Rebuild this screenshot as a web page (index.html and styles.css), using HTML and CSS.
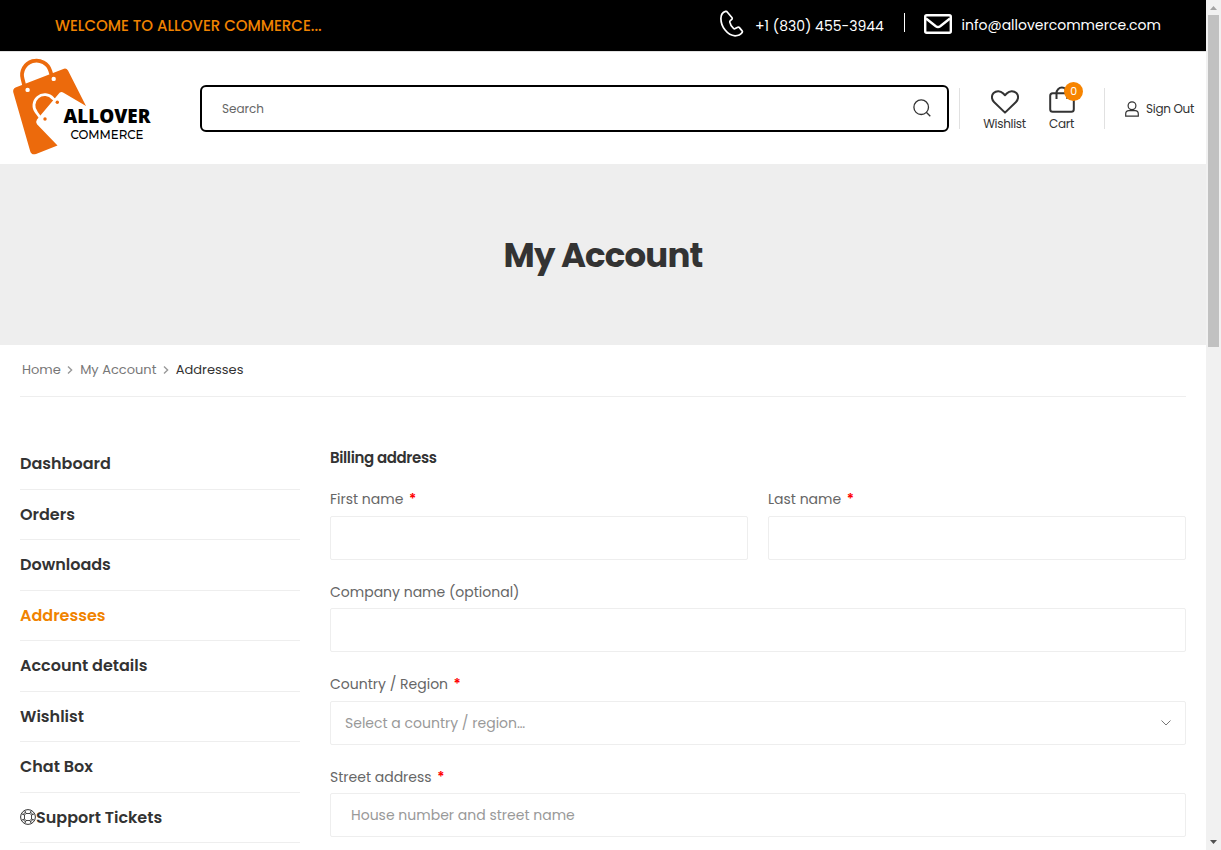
FILE: index.html
```html
<!DOCTYPE html>
<html lang="en">
<head>
<meta charset="utf-8">
<title>My Account</title>
<link rel="stylesheet" href="styles.css">
</head>
<body>
<div class="page">
  <div class="topbar">
    <span class="welcome">WELCOME TO ALLOVER COMMERCE...</span>
    <div class="contacts">
      <svg class="phone-icon" width="24" height="28" viewBox="0 0 24 28" fill="none" stroke="#fff" stroke-width="1.700" stroke-linejoin="round"><path d="M5.600 1.400C2.800 2.200.9 4.800.9 8.400c0 8.200 6.500 17.200 14.200 17.400 3.400 0 5.600-1.200 7.100-3.200.4-.6.3-1.200-.1-1.700l-2.700-3.300c-.4-.5-1-.6-1.600-.3l-2.600 1.300c-.6.3-1.200.2-1.700-.2-2-1.600-3.200-3.700-3.700-6.200-.1-.6 0-1.100.5-1.500l1.500-1.300c.5-.4.6-1 .3-1.600L7.200 2c-.3-.6-.9-.8-1.600-.6z"/></svg>
      <span class="phone">+1 (830) 455-3944</span>
      <span class="bar"></span>
      <svg class="mail-icon" width="28" height="20" viewBox="0 0 28 20" fill="none" stroke="#fff" stroke-width="2.400"><rect x="1.200" y="1.200" width="25.600" height="17.600" rx="1.500"/><path d="M2 4.500l9.800 7.700c1.400 1 3 1 4.400 0L26 4.500"/></svg>
      <span class="email">info@allovercommerce.com</span>
    </div>
  </div>
  <header class="header">
    <svg class="logo" width="145" height="104" viewBox="10 54 145 104">
      <path d="M24.500 86.500L22.600 79A14.300 14.300 0 0 1 50.300 71L52 76.500" fill="none" stroke="#ec6a0c" stroke-width="3.800"/>
      <path d="M15.500 87.500L64 68.700Q66.500 68 68 70.500L86 106 63.500 92.700Q60.500 91 58.500 94L37 119.500Q35.300 122 37 124.300L57.500 145.500 36 154Q31.500 155.300 30.300 151.500L13.200 92Q12.800 88.800 15.500 87.500z" fill="#ec6a0c"/>
      <path d="M40.500 118L36.500 112.500A10.500 10.500 0 0 1 53 98.500L56 101" fill="none" stroke="#fff" stroke-width="2.800"/>
      <circle cx="27.600" cy="89.900" r="2.200" fill="#fff"/><circle cx="53.700" cy="78.900" r="2.200" fill="#fff"/>
      <circle cx="57.300" cy="102.300" r="1.700" fill="#ec6a0c"/><circle cx="45" cy="119" r="1.700" fill="#ec6a0c"/>
      <text x="63.500" y="123" class="logo-main" textLength="87" lengthAdjust="spacingAndGlyphs">ALLOVER</text>
      <text x="70.500" y="138.800" class="logo-sub" textLength="73" lengthAdjust="spacingAndGlyphs">COMMERCE</text>
    </svg>
    <div class="search">
      <span class="search-text">Search</span>
      <svg width="18" height="18" viewBox="0 0 18 18" fill="none" stroke="#333" stroke-width="1.300"><circle cx="8.200" cy="8.200" r="7.300"/><path d="M13.300 13.300l4 4"/></svg>
    </div>
    <div class="actions">
      <div class="action wishlist">
        <svg width="28" height="24" viewBox="0 0 28 24" fill="none" stroke="#333" stroke-width="2" stroke-linejoin="round"><path d="M14 22.600L3 12C.3 9.300.3 5.300 2.600 3 5.300.5 9.500.700 12 3.300l2 2 2-2C18.500.700 22.700.500 25.400 3c2.300 2.300 2.300 6.300-.4 9z"/></svg>
        <span>Wishlist</span>
      </div>
      <div class="action cart">
        <svg width="26" height="27" viewBox="0 0 26 27" fill="none" stroke="#333" stroke-width="2"><rect x="1.200" y="7.200" width="23.600" height="18.600" rx="2.500"/><path d="M7.500 13V7a5.300 5.300 0 0 1 10.800 0v6"/></svg>
        <span class="badge">0</span>
        <span class="cart-text">Cart</span>
      </div>
    </div>
    <div class="sign">
      <svg width="14" height="16" viewBox="0 0 14 16" fill="none" stroke="#333" stroke-width="1.200"><circle cx="7" cy="4.700" r="3.900"/><path d="M.7 15.200v-2.300c0-1.900 1.300-3.200 3.200-3.200h6.200c1.900 0 3.200 1.300 3.200 3.200v2.300z"/></svg>
      <span>Sign Out</span>
    </div>
  </header>
  <section class="banner"><h1>My Account</h1></section>
  <nav class="crumbs">
    <span>Home</span>
    <svg width="6" height="8" viewBox="0 0 6 8" fill="none" stroke="#999" stroke-width="1.400"><path d="M1 .6l3.600 3.400L1 7.400"/></svg>
    <span>My Account</span>
    <svg width="6" height="8" viewBox="0 0 6 8" fill="none" stroke="#999" stroke-width="1.400"><path d="M1 .6l3.600 3.400L1 7.400"/></svg>
    <span class="current">Addresses</span>
  </nav>
  <div class="content">
    <ul class="menu">
      <li>Dashboard</li>
      <li>Orders</li>
      <li>Downloads</li>
      <li class="active">Addresses</li>
      <li>Account details</li>
      <li>Wishlist</li>
      <li>Chat Box</li>
      <li><svg width="16" height="16" viewBox="0 0 16 16" fill="none" stroke="#333" stroke-width="1"><circle cx="8" cy="8" r="7.400"/><path d="M6 4.500h4L11.500 6v4L10 11.500H6L4.500 10V6zM3.200 5.500Q4 4 5.500 3.200M10.500 3.200Q12 4 12.800 5.500M12.800 10.500Q12 12 10.500 12.800M5.500 12.800Q4 12 3.200 10.500M6 4.500L4.900 1.700M4.500 6L1.700 4.900M10 4.500l1.100-2.800M11.500 6l2.800-1.100M6 11.500l-1.100 2.800M4.500 10l-2.800 1.100M10 11.500l1.100 2.800M11.500 10l2.800 1.100" stroke-width=".9"/></svg>Support Tickets</li>
    </ul>
    <main class="form">
      <h2>Billing address</h2>
      <div class="row">
        <div class="field"><label>First name<b>*</b></label><div class="input"></div></div>
        <div class="field"><label>Last name<b>*</b></label><div class="input"></div></div>
      </div>
      <div class="field"><label>Company name (optional)</label><div class="input"></div></div>
      <div class="field"><label>Country / Region<b>*</b></label><div class="input select"><span>Select a country / region…</span><svg width="10" height="6" viewBox="0 0 10 6" fill="none" stroke="#777" stroke-width="1"><path d="M.5.500L5 5 9.500.500"/></svg></div></div>
      <div class="field"><label>Street address<b>*</b></label><div class="input street"><span>House number and street name</span></div></div>
    </main>
  </div>
</div>
<div class="scrollbar">
  <svg width="15" height="15" viewBox="0 0 15 15"><path d="M4 10h7L7.500 6z" fill="#a3a3a3"/></svg>
  <div class="thumb"></div>
  <svg width="15" height="15" viewBox="0 0 15 15"><path d="M4 5h7L7.500 9z" fill="#505050"/></svg>
</div>
</body>
</html>
```
FILE: styles.css
```css
* { box-sizing: border-box; }
body { margin: 0; height: 850px; overflow: hidden; display: flex; background: #fff; color: #333; font-family: Poppins, Inter, "Open Sans", sans-serif; font-size: 14px; }
svg { display: block; flex: none; }
span { white-space: nowrap; }
.page { width: 1206px; height: 850px; overflow: hidden; flex: none; }
.topbar { height: 52px; background: #000; border-bottom: 1px solid #e1e1e1; display: flex; justify-content: space-between; padding: 0 45px 0 55px; align-items: center; }
.welcome { color: #f08300; font-size: 15px; font-weight: 500; }
.contacts { display: flex; align-items: center; color: #fff; font-size: 14px; width: 441px; height: 48px; margin-bottom: 3px; }
.phone-icon { margin-right: 11px; }
.phone { width: 129px; padding-top: 5px; flex: none; }
.bar { width: 1px; height: 19px; background: #fff; margin: 0 19px 3px 20px; flex: none; }
.mail-icon { margin-right: 9.500px; }
.email { padding-top: 3px; }
.header { height: 112px; display: flex; align-items: center; padding-left: 10px; }
.logo { margin-bottom: 4px; }
.logo-main { font: 800 19.500px "Open Sans", sans-serif; }
.logo-sub { font: 500 12.300px Montserrat, Poppins, Lato, sans-serif; }
.search { width: 749px; height: 47px; margin-left: 45px; border: 2px solid #000; border-radius: 6px; display: flex; align-items: center; justify-content: space-between; padding: 0 16px 0 20px; color: #666; font-size: 12px; }
.search-text { padding-top: 1px; }
.actions { display: flex; height: 41px; margin-left: 10px; width: 146px; border-left: 1px solid #e1e1e1; border-right: 1px solid #e1e1e1; font-size: 12px; padding-left: 22.500px; letter-spacing: -.3px; }
.action { display: flex; flex-direction: column; align-items: center; position: relative; height: 46px; }
.wishlist { width: 44px; padding-top: 2px; }
.wishlist span { margin-top: 1px; }
.cart { width: 26px; margin-left: 22px; margin-top: -2px; }
.cart-text { margin-top: 2px; }
.badge { position: absolute; left: 15.500px; top: -3.500px; width: 19px; height: 19px; border-radius: 50%; background: #f78400; color: #fff; font-size: 11px; line-height: 19px; text-align: center; }
.sign { display: flex; align-items: center; gap: 7px; margin-left: 20px; padding-top: 1px; font-size: 12px; letter-spacing: -.3px; }
.banner { height: 181px; background: #eee; display: flex; align-items: center; justify-content: center; }
h1 { margin: 0; font-size: 34px; font-weight: 700; line-height: 40px; white-space: nowrap; letter-spacing: -.85px; }
.crumbs { height: 52px; margin: 0 20px; padding: 0 2px 2px; border-bottom: 1px solid #eee; display: flex; align-items: center; color: #777; font-size: 13px; gap: 6.700px; }
.current { color: #333; }
.content { display: flex; gap: 30px; padding: 42px 20px 0; }
.menu { width: 280px; margin: 0; padding: 0; list-style: none; font-size: 16px; font-weight: 600; }
.menu li { height: 50.540px; border-bottom: 1px solid #eee; display: flex; align-items: center; white-space: nowrap; }
.menu .active { color: #f08300; }
.form { flex: 1; }
h2 { margin: 0; height: 48.600px; line-height: 37px; font-size: 15px; font-weight: 600; letter-spacing: -.375px; }
.row { display: flex; gap: 20px; }
.field { flex: 1; height: 92.450px; }
.field label { display: flex; height: 28.400px; line-height: 24px; color: #666; font-size: 14px; }
.row .field label { line-height: 22.600px; }
.field b { color: #f00; margin-left: 5.500px; font-weight: 600; }
.input { height: 44px; border: 1px solid #eee; border-radius: 2px; display: flex; align-items: center; justify-content: space-between; padding: 0 14px; color: #999; font-size: 14px; }
.select { padding: 1px 14px 0 14px; }
.street { padding-left: 20px; }
.scrollbar { width: 15px; height: 850px; background: #f1f1f1; display: flex; flex-direction: column; align-items: center; }
.thumb { width: 11px; height: 332px; background: #c1c1c1; margin-bottom: auto; }
```
